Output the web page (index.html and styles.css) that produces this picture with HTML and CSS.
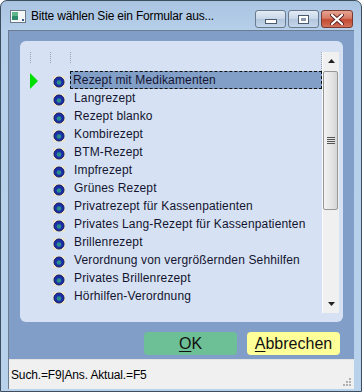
FILE: index.html
```html
<!DOCTYPE html>
<html>
<head>
<meta charset="utf-8">
<link rel="stylesheet" href="styles.css">
</head>
<body>
<div class="win">
  <div class="titlebar">
    <svg class="appicon" width="16" height="13" viewBox="0 0 16 13">
      <rect x="0.5" y="0.5" width="15" height="12" fill="#f4f6f8" stroke="#6a7888"/>
      <rect x="2" y="2" width="6" height="8" fill="#2f8a6a"/>
      <rect x="2" y="2" width="6" height="4" fill="#5fb58a"/>
      <rect x="12" y="9" width="2" height="2" fill="#3a5a8a"/>
    </svg>
    <span class="title">Bitte wählen Sie ein Formular aus...</span>
    <div class="caps">
      <div class="cap">
        <svg width="12" height="5" viewBox="0 0 12 5"><rect x="0.5" y="0.5" width="11" height="4" fill="#fff" stroke="#4a5a6e"/></svg>
      </div>
      <div class="cap">
        <svg width="11" height="9" viewBox="0 0 11 9"><rect x="0.5" y="0.5" width="10" height="8" fill="#fff" stroke="#4a5a6e"/><rect x="3" y="3" width="5" height="3" fill="#8a98aa"/></svg>
      </div>
      <div class="cap close">
        <svg width="14" height="11" viewBox="0 0 14 11"><path d="M2 1 L12 10 M12 1 L2 10" stroke="#5a2020" stroke-width="4" stroke-linecap="round"/><path d="M2 1 L12 10 M12 1 L2 10" stroke="#fff" stroke-width="2.2" stroke-linecap="round"/></svg>
      </div>
    </div>
  </div>
  <div class="client">
    <div class="main">
      <div class="panel">
        <div class="listwrap">
          <div class="listcol">
            <div class="hdr">
              <div class="hc w20"><span class="sep"></span></div>
              <div class="hc w20"><span class="sep"></span></div>
              <div class="hc wtext"><span class="sep"></span><span class="sep end"></span></div>
            </div>
            <div class="row">
              <div class="c1"><svg width="8" height="16" viewBox="0 0 8 16"><polygon points="0,0 8,8 0,16" fill="#00e000"/></svg></div>
              <div class="c2"><svg class="bul" width="12" height="12" viewBox="0 0 12 12"><rect width="12" height="12" fill="#ebe4cc"/><circle cx="6" cy="6" r="5" fill="#1c2fa8" stroke="#0d1a66" stroke-width="1"/><circle cx="6" cy="6.5" r="2.3" fill="#2b8f8c"/></svg></div>
              <div class="c3 sel">Rezept mit Medikamenten</div>
            </div>
            <div class="row"><div class="c1"></div><div class="c2"><svg class="bul" width="12" height="12" viewBox="0 0 12 12"><rect width="12" height="12" fill="#ebe4cc"/><circle cx="6" cy="6" r="5" fill="#1c2fa8" stroke="#0d1a66" stroke-width="1"/><circle cx="6" cy="6.5" r="2.3" fill="#2b8f8c"/></svg></div><div class="c3">Langrezept</div></div>
            <div class="row"><div class="c1"></div><div class="c2"><svg class="bul" width="12" height="12" viewBox="0 0 12 12"><rect width="12" height="12" fill="#ebe4cc"/><circle cx="6" cy="6" r="5" fill="#1c2fa8" stroke="#0d1a66" stroke-width="1"/><circle cx="6" cy="6.5" r="2.3" fill="#2b8f8c"/></svg></div><div class="c3">Rezept blanko</div></div>
            <div class="row"><div class="c1"></div><div class="c2"><svg class="bul" width="12" height="12" viewBox="0 0 12 12"><rect width="12" height="12" fill="#ebe4cc"/><circle cx="6" cy="6" r="5" fill="#1c2fa8" stroke="#0d1a66" stroke-width="1"/><circle cx="6" cy="6.5" r="2.3" fill="#2b8f8c"/></svg></div><div class="c3">Kombirezept</div></div>
            <div class="row"><div class="c1"></div><div class="c2"><svg class="bul" width="12" height="12" viewBox="0 0 12 12"><rect width="12" height="12" fill="#ebe4cc"/><circle cx="6" cy="6" r="5" fill="#1c2fa8" stroke="#0d1a66" stroke-width="1"/><circle cx="6" cy="6.5" r="2.3" fill="#2b8f8c"/></svg></div><div class="c3">BTM-Rezept</div></div>
            <div class="row"><div class="c1"></div><div class="c2"><svg class="bul" width="12" height="12" viewBox="0 0 12 12"><rect width="12" height="12" fill="#ebe4cc"/><circle cx="6" cy="6" r="5" fill="#1c2fa8" stroke="#0d1a66" stroke-width="1"/><circle cx="6" cy="6.5" r="2.3" fill="#2b8f8c"/></svg></div><div class="c3">Impfrezept</div></div>
            <div class="row"><div class="c1"></div><div class="c2"><svg class="bul" width="12" height="12" viewBox="0 0 12 12"><rect width="12" height="12" fill="#ebe4cc"/><circle cx="6" cy="6" r="5" fill="#1c2fa8" stroke="#0d1a66" stroke-width="1"/><circle cx="6" cy="6.5" r="2.3" fill="#2b8f8c"/></svg></div><div class="c3">Grünes Rezept</div></div>
            <div class="row"><div class="c1"></div><div class="c2"><svg class="bul" width="12" height="12" viewBox="0 0 12 12"><rect width="12" height="12" fill="#ebe4cc"/><circle cx="6" cy="6" r="5" fill="#1c2fa8" stroke="#0d1a66" stroke-width="1"/><circle cx="6" cy="6.5" r="2.3" fill="#2b8f8c"/></svg></div><div class="c3">Privatrezept für Kassenpatienten</div></div>
            <div class="row"><div class="c1"></div><div class="c2"><svg class="bul" width="12" height="12" viewBox="0 0 12 12"><rect width="12" height="12" fill="#ebe4cc"/><circle cx="6" cy="6" r="5" fill="#1c2fa8" stroke="#0d1a66" stroke-width="1"/><circle cx="6" cy="6.5" r="2.3" fill="#2b8f8c"/></svg></div><div class="c3">Privates Lang-Rezept für Kassenpatienten</div></div>
            <div class="row"><div class="c1"></div><div class="c2"><svg class="bul" width="12" height="12" viewBox="0 0 12 12"><rect width="12" height="12" fill="#ebe4cc"/><circle cx="6" cy="6" r="5" fill="#1c2fa8" stroke="#0d1a66" stroke-width="1"/><circle cx="6" cy="6.5" r="2.3" fill="#2b8f8c"/></svg></div><div class="c3">Brillenrezept</div></div>
            <div class="row"><div class="c1"></div><div class="c2"><svg class="bul" width="12" height="12" viewBox="0 0 12 12"><rect width="12" height="12" fill="#ebe4cc"/><circle cx="6" cy="6" r="5" fill="#1c2fa8" stroke="#0d1a66" stroke-width="1"/><circle cx="6" cy="6.5" r="2.3" fill="#2b8f8c"/></svg></div><div class="c3">Verordnung von vergrößernden Sehhilfen</div></div>
            <div class="row"><div class="c1"></div><div class="c2"><svg class="bul" width="12" height="12" viewBox="0 0 12 12"><rect width="12" height="12" fill="#ebe4cc"/><circle cx="6" cy="6" r="5" fill="#1c2fa8" stroke="#0d1a66" stroke-width="1"/><circle cx="6" cy="6.5" r="2.3" fill="#2b8f8c"/></svg></div><div class="c3">Privates Brillenrezept</div></div>
            <div class="row"><div class="c1"></div><div class="c2"><svg class="bul" width="12" height="12" viewBox="0 0 12 12"><rect width="12" height="12" fill="#ebe4cc"/><circle cx="6" cy="6" r="5" fill="#1c2fa8" stroke="#0d1a66" stroke-width="1"/><circle cx="6" cy="6.5" r="2.3" fill="#2b8f8c"/></svg></div><div class="c3">Hörhilfen-Verordnung</div></div>
          </div>
          <div class="scroll">
            <div class="arrow"><svg width="7" height="4" viewBox="0 0 7 4"><polygon points="3.5,0 7,4 0,4" fill="#222"/></svg></div>
            <div class="track">
              <div class="thumb">
                <svg width="8" height="7" viewBox="0 0 8 7"><rect x="0" y="0" width="8" height="1" fill="#555"/><rect x="0" y="2" width="8" height="1" fill="#555"/><rect x="0" y="4" width="8" height="1" fill="#555"/><rect x="0" y="6" width="8" height="1" fill="#555"/></svg>
              </div>
            </div>
            <div class="arrow"><svg width="7" height="4" viewBox="0 0 7 4"><polygon points="0,0 7,0 3.5,4" fill="#222"/></svg></div>
          </div>
        </div>
      </div>
      <div class="buttons">
        <div class="btn ok"><u>O</u>K</div>
        <div class="btn cancel"><u>A</u>bbrechen</div>
      </div>
    </div>
    <div class="status">
      <span class="stext">Such.=F9|Ans. Aktual.=F5</span>
      <svg class="grip" width="9" height="9" viewBox="0 0 9 9"><g fill="#b0b0b0"><rect x="7" y="1" width="2" height="2"/><rect x="4" y="4" width="2" height="2"/><rect x="7" y="4" width="2" height="2"/><rect x="1" y="7" width="2" height="2"/><rect x="4" y="7" width="2" height="2"/><rect x="7" y="7" width="2" height="2"/></g></svg>
    </div>
  </div>
</div>
</body>
</html>
```
FILE: styles.css
```css
* { box-sizing: border-box; }
html, body { margin: 0; padding: 0; }
body { width: 362px; height: 392px; overflow: hidden; background: #fff; font-family: "Liberation Sans", Arial, sans-serif; }

.win {
  width: 362px; height: 392px;
  border: 1px solid #3e4d5e;
  border-radius: 7px 7px 0 0;
  background: linear-gradient(to bottom, #a9c4e1 0px, #b6cfea 30px, #b9d2ec 100%);
  display: flex; flex-direction: column;
  padding: 0 7px 2px 7px;
}

.titlebar {
  height: 29px; flex: none;
  display: flex; align-items: center;
  margin: 0 -7px; padding: 0 8px 0 9px;
}
.appicon { flex: none; margin-top: 1px; }
.title { font-family: "Liberation Sans", Arial, sans-serif; font-size: 12px; color: #000; margin-left: 5px; margin-top: 1px; letter-spacing: -0.18px; }
.caps { margin-left: auto; display: flex; gap: 2px; align-self: flex-start; margin-top: 9px; }
.cap {
  width: 31px; height: 18px;
  border: 1px solid #6b7a8d; border-radius: 3px;
  background: linear-gradient(to bottom, #e3ecf6 0%, #c7d6e8 50%, #b2c6dd 51%, #c4d6ea 100%);
  display: flex; align-items: center; justify-content: center;
}
.cap:first-child svg { margin-top: 5px; }
.cap.close {
  width: 32px;
  border-color: #7a3a32;
  background: linear-gradient(to bottom, #e6a493 0%, #d77a64 45%, #c44a32 55%, #d2715a 100%);
}

.client {
  flex: 1; display: flex; flex-direction: column;
  border-left: 1px solid #6e7c8f; border-top: 1px solid #6e7c8f;
}
.main {
  height: 328px; flex: none;
  background: #809ec7;
  display: flex; flex-direction: column;
  padding: 10px 0 0 11px;
}
.panel {
  width: 323px; height: 281px;
  background: #d6e2f3;
  border-radius: 6px;
  padding: 11px 4px 0 10px;
}
.listwrap { display: flex; }
.listcol { width: 292px; display: flex; flex-direction: column; }
.hdr { height: 19px; display: flex; }
.hc { display: flex; justify-content: space-between; }
.w20 { width: 20px; }
.wtext { width: 252px; }
.sep { display: block; width: 1px; height: 11px; border-left: 1px dotted #9aa3ad; }
.sep.end { height: 19px; }

.row { height: 18px; display: flex; align-items: center; }
.c1 { width: 20px; height: 18px; display: flex; align-items: center; }
.c1 svg { margin-top: 1px; }
.c2 { width: 20px; height: 18px; display: flex; align-items: center; padding-left: 3px; }
.bul { display: block; margin-top: 3px; }
.c3 {
  width: 252px; height: 18px;
  font-size: 12px; color: #141430;
  padding-left: 3px; line-height: 16px;
  letter-spacing: 0.15px;
  border: 1px solid transparent;
  white-space: nowrap;
}
.c3.sel { background: #829fc8; border: 1px dashed #111; padding-left: 2px; }

.scroll {
  width: 17px; height: 261px; margin-left: 0;
  background: #f0f0f0;
  border-left: 1px solid #fbfbfb;
  display: flex; flex-direction: column;
}
.arrow { height: 18px; flex: none; display: flex; align-items: center; justify-content: center; }
.track { flex: 1; padding: 1px 0 0 0; }
.thumb {
  height: 139px; margin: 0 1px 0 0;
  border: 1px solid #979797; border-radius: 2px;
  background: linear-gradient(to right, #f2f2f2 0%, #e6e6e6 50%, #d6d6d6 100%);
  display: flex; align-items: center; justify-content: center;
}

.buttons {
  display: flex; justify-content: flex-end; gap: 10px;
  margin-top: 10px; padding-right: 14px;
}
.btn {
  width: 93px; height: 23px; border-radius: 4px;
  font-family: "Liberation Sans", Arial, sans-serif; font-size: 16px; color: #111;
  display: flex; align-items: center; justify-content: center;
}
.btn u { text-decoration-thickness: 1px; text-underline-offset: 2px; }
.ok { background: #6dbf96; }
.cancel { background: #ffff99; }

.status {
  height: 30px; flex: none;
  background: #f0f0f0;
  border-top: 1px solid #e4e4e4;
  display: flex; align-items: center;
  padding-left: 2px; padding-right: 3px;
  position: relative;
}
.stext { font-family: "Liberation Sans", Arial, sans-serif; font-size: 12px; color: #000; margin-top: 1px; letter-spacing: -0.15px; }
.grip { margin-left: auto; align-self: flex-end; margin-bottom: 3px; }
```
